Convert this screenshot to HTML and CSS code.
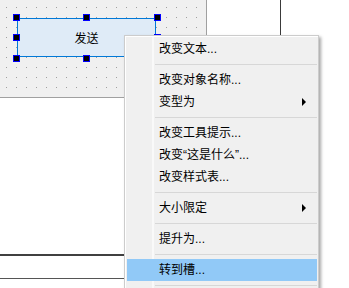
FILE: index.html
```html
<!DOCTYPE html>
<html lang="zh-CN">
<head>
    <meta charset="UTF-8">
    <title>设计器 - 右键菜单</title>
    <link rel="stylesheet" href="styles.css">
</head>
<body>
    <!-- 设计区域 -->
    <div class="designer">
        <div class="form">
            <div class="widget">
                <span class="widget-text">发送</span>
                <span class="handle h-tl"></span>
                <span class="handle h-tm"></span>
                <span class="handle h-tr"></span>
                <span class="handle h-ml"></span>
                <span class="handle h-mr"></span>
                <span class="handle h-bl"></span>
                <span class="handle h-bm"></span>
            </div>
        </div>
        <div class="vline"></div>
        <div class="hline hline-1"></div>
        <div class="hline hline-2"></div>
    </div>

    <!-- 右键菜单 -->
    <ul class="menu">
        <li class="item">改变文本...</li>
        <li class="sep"></li>
        <li class="item">改变对象名称...</li>
        <li class="item sub">变型为</li>
        <li class="sep"></li>
        <li class="item">改变工具提示...</li>
        <li class="item">改变“这是什么”...</li>
        <li class="item">改变样式表...</li>
        <li class="sep"></li>
        <li class="item sub">大小限定</li>
        <li class="sep"></li>
        <li class="item">提升为...</li>
        <li class="sep"></li>
        <li class="item active">转到槽...</li>
        <li class="sep"></li>
    </ul>
</body>
</html>
```

FILE: styles.css
```css
body {
    margin: 0;
    width: 349px;
    height: 288px;
    overflow: hidden;
    position: relative;
    background: #ffffff;
    font-family: 'Liberation Sans', 'Noto Sans CJK SC', sans-serif;
    font-size: 12px;
    color: #000;
}
.designer {
    position: relative;
    width: 349px;
    height: 288px;
}
/* 网格窗体 */
.form {
    position: relative;
    width: 206px;
    height: 97px;
    border-right: 1px solid #a0a0a0;
    border-bottom: 1px solid #a0a0a0;
    background-color: #f0f0f0;
    background-image: url("data:image/svg+xml,%3Csvg xmlns='http://www.w3.org/2000/svg' width='10' height='10'%3E%3Crect width='1' height='1' fill='%23a0a0a0'/%3E%3C/svg%3E");
    background-position: 6px 7px;
}
.widget {
    position: absolute;
    left: 17px;
    top: 18px;
    width: 137px;
    height: 37px;
    border: 1px solid #0078d7;
    background: #dfebf7;
    display: flex;
    justify-content: center;
    align-items: center;
}
.widget-text {
    font-family: 'Noto Sans CJK SC', sans-serif;
    font-size: 12px;
}
.handle {
    position: absolute;
    width: 5px;
    height: 5px;
    background: #000;
    border: 1px solid #0000ff;
}
.h-tl { left: -5px; top: -5px; }
.h-tm { left: 65px; top: -5px; }
.h-tr { left: 136px; top: -5px; }
.h-ml { left: -5px; top: 15px; }
.h-mr { left: 136px; top: 15px; }
.h-bl { left: -5px; top: 36px; }
.h-bm { left: 65px; top: 36px; }
.vline {
    position: absolute;
    left: 280px;
    top: 0;
    width: 1px;
    height: 288px;
    background: #3a3a3a;
}
.hline {
    position: absolute;
    left: 0;
    width: 280px;
}
.hline-1 {
    top: 254px;
    height: 2px;
    background: #404040;
}
.hline-2 {
    top: 278px;
    height: 1px;
    background: #555;
}
/* 菜单 */
.menu {
    position: absolute;
    left: 124px;
    top: 35px;
    width: 190px;
    margin: 0;
    padding: 2px 1px 2px 2px;
    list-style: none;
    background-color: #f0f0f0;
    background-image: linear-gradient(to right, transparent 27px, #f9f9f9 27px, #f9f9f9 29px, transparent 29px);
    border: 1px solid #cccccc;
    box-shadow: inset 1px 1px 0 #fff, 2px 2px 3px rgba(0, 0, 0, 0.35);
}
.item {
    height: 22px;
    line-height: 22px;
    padding-left: 32px;
    padding-right: 11px;
    display: flex;
    justify-content: space-between;
    align-items: center;
    white-space: nowrap;
}
.item.active {
    background: #91c9f7;
}
.item.sub::after {
    content: '';
    width: 0;
    height: 0;
    border-left: 4px solid #000;
    border-top: 4px solid transparent;
    border-bottom: 4px solid transparent;
}
.sep {
    height: 1px;
    margin: 4px 0 4px 28px;
    background: #d7d7d7;
}
```
